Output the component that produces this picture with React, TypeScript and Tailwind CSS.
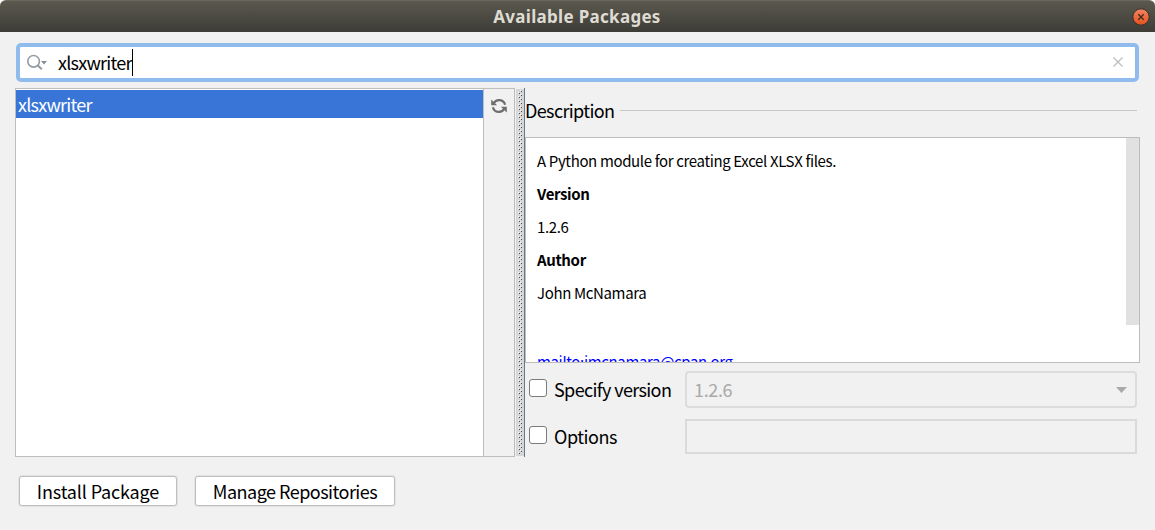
import React from "react";

const ui = "font-['Noto_Sans_CJK_SC',sans-serif]";

function CloseButton() {
  return (
    <svg className="h-[18px] w-[18px]" viewBox="0 0 18 18" fill="none">
      <defs>
        <linearGradient id="close" x1="0" y1="0" x2="0" y2="1">
          <stop offset="0" stopColor="#f58562" />
          <stop offset="1" stopColor="#e4501d" />
        </linearGradient>
      </defs>
      <circle cx="9" cy="9" r="8.2" fill="url(#close)" stroke="#33322d" strokeWidth="1" />
      <path d="M6.3 6.3l5.4 5.4M11.7 6.3l-5.4 5.4" stroke="#3b2a20" strokeWidth="1.3" />
    </svg>
  );
}

function SearchIcon() {
  return (
    <svg className="h-[18px] w-[22px]" viewBox="0 0 22 18" fill="none">
      <circle cx="6.6" cy="7.3" r="5.8" stroke="#949ca3" strokeWidth="1.6" />
      <path d="M10.8 11.4l4 3.8" stroke="#949ca3" strokeWidth="2.1" />
      <path d="M14 7h6l-3 3.5z" fill="#858f97" />
    </svg>
  );
}

function RefreshIcon() {
  return (
    <svg className="h-4 w-4" viewBox="0 0 16 16" fill="none">
      <path d="M2.6 5.4A6.2 6.2 0 0 1 14.1 6.8M13.4 10.6A6.2 6.2 0 0 1 1.9 9.2" stroke="#6e6e6e" strokeWidth="2.2" />
      <path d="M0.2 1.4v5.9h5.9zM15.8 14.6V8.7H9.9z" fill="#6e6e6e" />
    </svg>
  );
}

function Splitter() {
  return (
    <svg className="h-[369px] w-[9px] shrink-0" viewBox="0 0 9 369" shapeRendering="crispEdges">
      <defs>
        <pattern id="dots" x="0" y="0" width="4" height="4" patternUnits="userSpaceOnUse">
          <rect x="2" y="0" width="1" height="1" fill="#fff" />
          <rect x="0" y="2" width="1" height="1" fill="#fff" />
          <rect x="3" y="1" width="1" height="1" fill="#4a4a4a" />
          <rect x="1" y="3" width="1" height="1" fill="#4a4a4a" />
        </pattern>
      </defs>
      <rect y="1" width="8" height="367" fill="#d6d6d6" />
      <rect x="2" y="2" width="4" height="364" fill="url(#dots)" />
      <rect x="8" width="1" height="369" fill="#64798c" />
    </svg>
  );
}

function CheckLabel({ label, tracking }: { label: string; tracking: string }) {
  return (
    <label className="flex w-[157px] shrink-0 items-center gap-[7px] whitespace-nowrap pl-[1px] text-[18px]">
      <span className="-mt-[3px] h-[18px] w-[18px] shrink-0 rounded-[3px] border border-[#7b7b7b] bg-white" />
      <span className={`pb-px ${tracking}`}>{label}</span>
    </label>
  );
}

const button =
  "flex h-[30px] items-center justify-center rounded-[3px] border border-[#bfbfbf] bg-white whitespace-nowrap shadow-[0_0_0_1px_#e2e2e2]";

export default function App() {
  return (
    <div className="h-[530px] w-[1155px] overflow-hidden bg-white">
      <div className={`flex h-full flex-col rounded-t-[6px] bg-[#f1f1f1] text-black ${ui}`}>
        <header className="grid h-8 shrink-0 grid-cols-[1fr_auto_1fr] items-center rounded-t-[6px] border-t border-[#6b695d] bg-linear-to-b from-[#5b594e] to-[#3d3c37] pr-[5px]">
          <span />
          <h1 className="pl-[4px] font-['Noto_Sans',sans-serif] text-[17px] leading-6 font-bold tracking-[0.3px] text-[#dfdbd2]">Available Packages</h1>
          <span className="flex justify-end">
            <CloseButton />
          </span>
        </header>

        <div className="mt-[11px] ml-4 flex h-[39px] w-[1123px] shrink-0 items-center rounded-[5px] border-4 border-[#8fbced] bg-white pl-[7px] pr-[12px]">
          <SearchIcon />
          <span className="mb-[2px] ml-[9px] w-[74px] text-[18px] leading-7 tracking-[-0.77px] whitespace-nowrap">xlsxwriter</span>
          <span className="h-[27px] w-px bg-black" />
          <svg className="mb-[2px] ml-auto h-[10px] w-[10px]" viewBox="0 0 10 10">
            <path d="M.5.5l9 9M9.5.5l-9 9" stroke="#b9bdc1" strokeWidth="1.2" />
          </svg>
        </div>

        <main className="mt-[6px] ml-[15px] flex h-[369px] shrink-0">
          <section className="flex w-[500px] border border-[#bdbdbd] bg-[#f1f1f1]">
            <div className="w-[468px] border-r border-[#bdbdbd] bg-white pt-px">
              <div className="h-7 bg-[#3875d7] pl-[2px] text-[18px] leading-[29px] tracking-[-0.77px] text-white">xlsxwriter</div>
            </div>
            <div className="flex flex-1 justify-center pt-[9px]">
              <RefreshIcon />
            </div>
          </section>
          <span className="w-px" />
          <Splitter />

          <section className="flex w-[615px] flex-col">
            <div className="flex h-[49px] shrink-0 items-start gap-[6px] pt-[8px] pr-[3px]">
              <h2 className="text-[18px] leading-7 tracking-[-0.63px]">Description</h2>
              <span className="mt-[14px] h-px flex-1 bg-[#c9c9c9]" />
            </div>
            <div className="flex h-[226px] shrink-0 overflow-hidden border border-[#bdbdbd] bg-white">
              <div className="flex-1 pt-[6px] pl-[11px] text-[15px] leading-[33px] tracking-[-0.36px]">
                <p>A Python module for creating Excel XLSX files.</p>
                <p className="font-bold">Version</p>
                <p>1.2.6</p>
                <p className="font-bold">Author</p>
                <p>John McNamara</p>
                <p className="mt-9 text-[#0000ff] underline">mailto:jmcnamara@cpan.org</p>
              </div>
              <div className="h-[187px] w-[13px] bg-[#e1e1e1]" />
            </div>
            <div className="mt-2 flex h-[37px] shrink-0 pl-[3px]">
              <CheckLabel label="Specify version" tracking="tracking-[-0.63px]" />
              <div className="flex w-[452px] items-center justify-between rounded-[4px] border-2 border-[#dcdcdc] pr-[8px] pl-[7px] text-[18px] tracking-[-0.35px] text-[#a9a9a9]">
                <span className="pb-px">1.2.6</span>
                <svg className="h-[6px] w-[11px]" viewBox="0 0 11 6"><path d="M0 0h11L5.5 6z" fill="#a9a9a9" /></svg>
              </div>
            </div>
            <div className="mt-[11px] flex h-[35px] shrink-0 pl-[3px]">
              <CheckLabel label="Options" tracking="tracking-[-0.45px]" />
              <div className="w-[452px] border-2 border-[#dadada]" />
            </div>
          </section>
        </main>

        <footer className="mt-[19px] ml-[19px] flex gap-[18px] text-[18px] leading-7">
          <button className={`${button} w-[158px] tracking-[-0.15px]`}>Install Package</button>
          <button className={`${button} w-[200px] tracking-[-0.52px]`}>Manage Repositories</button>
        </footer>
      </div>
    </div>
  );
}
